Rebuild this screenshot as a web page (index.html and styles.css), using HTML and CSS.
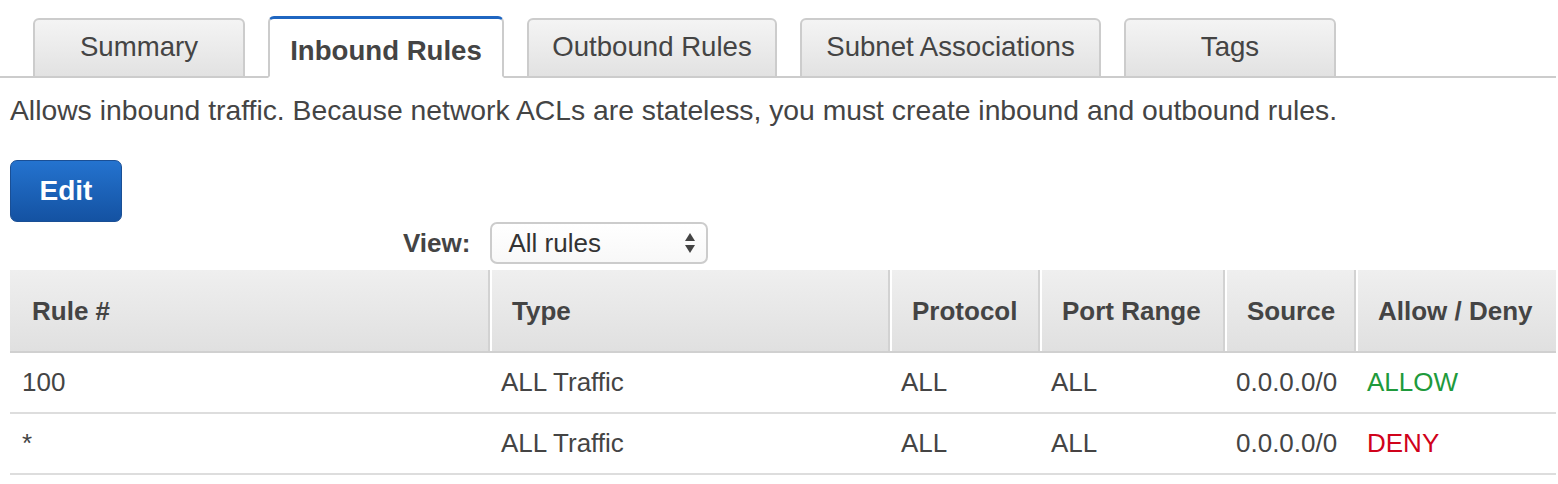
FILE: index.html
```html
<!DOCTYPE html>
<html>
<head>
<meta charset="utf-8">
<link rel="stylesheet" href="styles.css">
</head>
<body>
<div class="tabs">
  <div class="tab t-summary">Summary</div>
  <div class="tab t-inbound active">Inbound Rules</div>
  <div class="tab t-outbound">Outbound Rules</div>
  <div class="tab t-subnet">Subnet Associations</div>
  <div class="tab t-tags">Tags</div>
</div>
<p class="desc">Allows inbound traffic. Because network ACLs are stateless, you must create inbound and outbound rules.</p>
<button class="btn-edit">Edit</button>
<div class="view-row">
  <span class="view-label">View:</span>
  <div class="select">
    <span>All rules</span>
    <svg class="arrows" width="12" height="24" viewBox="0 0 12 24"><path d="M6 2 L11 10 L1 10 Z M1 14 L11 14 L6 22 Z" fill="#444"/></svg>
  </div>
</div>
<table class="rules">
  <thead>
    <tr>
      <th class="c1">Rule #</th>
      <th class="c2">Type</th>
      <th class="c3">Protocol</th>
      <th class="c4">Port Range</th>
      <th class="c5">Source</th>
      <th class="c6">Allow / Deny</th>
    </tr>
  </thead>
  <tbody>
    <tr>
      <td>100</td>
      <td>ALL Traffic</td>
      <td>ALL</td>
      <td>ALL</td>
      <td>0.0.0.0/0</td>
      <td class="allow">ALLOW</td>
    </tr>
    <tr>
      <td>*</td>
      <td>ALL Traffic</td>
      <td>ALL</td>
      <td>ALL</td>
      <td>0.0.0.0/0</td>
      <td class="deny">DENY</td>
    </tr>
  </tbody>
</table>
</body>
</html>
```

FILE: styles.css
```css
* { box-sizing: border-box; }
body {
  margin: 0;
  font-family: "Liberation Sans", Arial, Helvetica, sans-serif;
  color: #444;
  background: #fff;
}
.tabs {
  display: flex;
  align-items: flex-end;
  gap: 23px;
  padding: 16px 0 0 33px;
  margin-right: 2px;
  border-bottom: 2px solid #ccc;
  height: 78px;
}
.tab {
  flex: none;
  height: 60px;
  margin-bottom: -2px;
  padding: 0 0 3px;
  display: flex;
  align-items: center;
  justify-content: center;
  font-size: 27.6px;
  color: #444;
  white-space: nowrap;
  border: 2px solid #ccc;
  border-bottom: 2px solid #ccc;
  border-radius: 6px 6px 0 0;
  background: linear-gradient(#f4f4f4, #e2e2e2);
}
.t-summary { width: 212px; }
.t-inbound { width: 236px; }
.t-outbound { width: 250px; }
.t-subnet { width: 301px; }
.t-tags { width: 212px; }
.tab.active {
  height: 62px;
  margin-bottom: -2px;
  padding: 6px 0 0;
  border-top: 3px solid #1f66c1;
  border-bottom: 2px solid #fff;
  background: #fff;
  font-weight: bold;
}
.desc {
  margin: 0;
  padding: 15px 0 0 10px;
  font-size: 28.3px;
  line-height: 34px;
  height: 82px;
  color: #444;
}
.btn-edit {
  display: block;
  margin-left: 10px;
  width: 112px;
  height: 62px;
  border: 1px solid #1a4f95;
  border-radius: 7px;
  background: linear-gradient(#2473cf, #1452a2);
  color: #fff;
  font-family: inherit;
  font-weight: bold;
  font-size: 28px;
  padding: 0;
}
.view-row {
  display: flex;
  align-items: center;
  gap: 20px;
  margin-left: 403px;
  height: 42px;
}
.view-label {
  font-weight: bold;
  font-size: 26px;
  color: #444;
}
.select {
  width: 218px;
  height: 42px;
  border: 2px solid #ccc;
  border-radius: 7px;
  background: linear-gradient(#fff, #f8f8f8);
  display: flex;
  align-items: center;
  justify-content: space-between;
  padding: 0 10px 0 16px;
  font-size: 26px;
  color: #333;
}
.arrows { display: block; }
.rules {
  margin: 6px 0 0 10px;
  width: 1546px;
  border-collapse: collapse;
  font-size: 26px;
  color: #444;
}
.rules th {
  height: 82px;
  padding: 1px 0 0 22px;
  text-align: left;
  font-weight: bold;
  background: linear-gradient(#efefef, #e0e0e0);
  border-bottom: 2px solid #d0d0d0;
}
.rules th + th {
  border-left: 2px solid #d2d2d2;
  box-shadow: inset 2px 0 0 #fff;
}
.rules .c1 { width: 479px; }
.rules .c2 { width: 400px; }
.rules .c3 { width: 150px; }
.rules .c4 { width: 185px; }
.rules .c5 { width: 131px; }
.rules td {
  height: 61px;
  padding: 0 0 0 12px;
  border-bottom: 2px solid #ddd;
}
.rules td.allow { color: #1e9a3c; }
.rules td.deny { color: #d0021b; }
```
